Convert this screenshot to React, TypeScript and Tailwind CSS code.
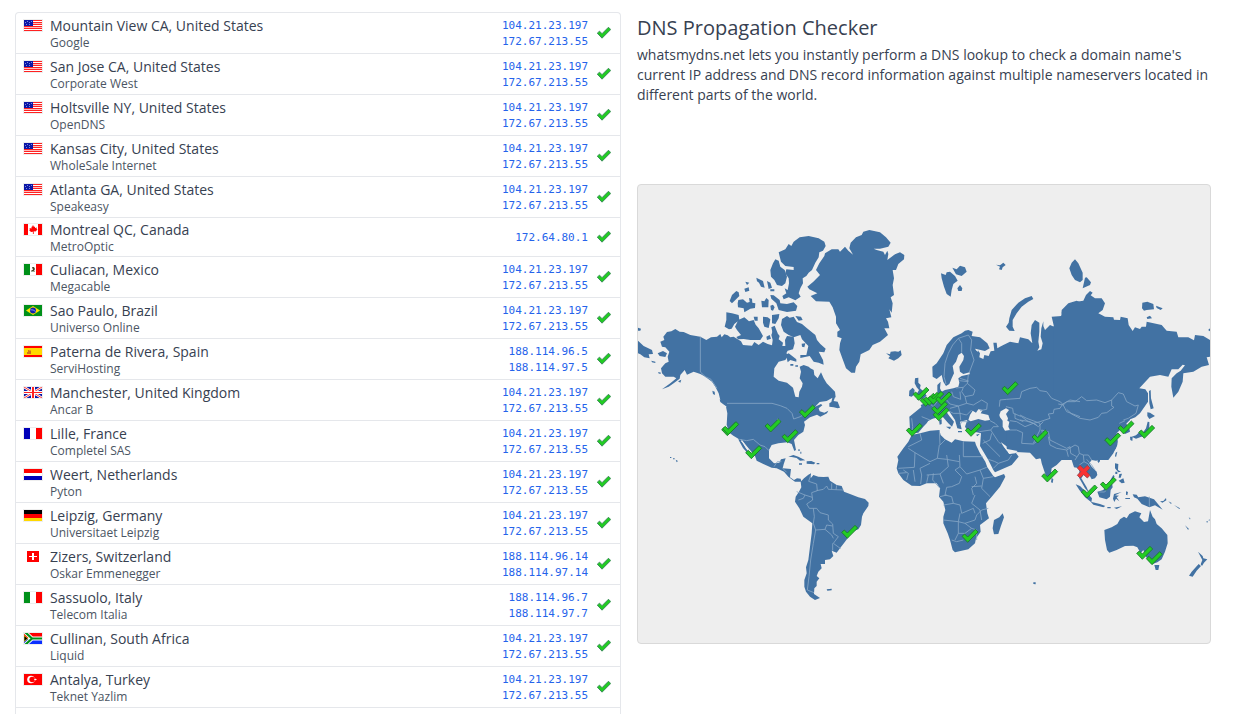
import React from "react";

type Country =
  | "us" | "ca" | "mx" | "br" | "es" | "gb" | "fr" | "nl"
  | "de" | "ch" | "it" | "za" | "tr";

interface Server {
  country: Country;
  location: string;
  provider: string;
  ips: string[];
}

const CLOUD = ["104.21.23.197", "172.67.213.55"];

const SERVERS: Server[] = [
  { country: "us", location: "Mountain View CA, United States", provider: "Google", ips: CLOUD },
  { country: "us", location: "San Jose CA, United States", provider: "Corporate West", ips: CLOUD },
  { country: "us", location: "Holtsville NY, United States", provider: "OpenDNS", ips: CLOUD },
  { country: "us", location: "Kansas City, United States", provider: "WholeSale Internet", ips: CLOUD },
  { country: "us", location: "Atlanta GA, United States", provider: "Speakeasy", ips: CLOUD },
  { country: "ca", location: "Montreal QC, Canada", provider: "MetroOptic", ips: ["172.64.80.1"] },
  { country: "mx", location: "Culiacan, Mexico", provider: "Megacable", ips: CLOUD },
  { country: "br", location: "Sao Paulo, Brazil", provider: "Universo Online", ips: CLOUD },
  { country: "es", location: "Paterna de Rivera, Spain", provider: "ServiHosting", ips: ["188.114.96.5", "188.114.97.5"] },
  { country: "gb", location: "Manchester, United Kingdom", provider: "Ancar B", ips: CLOUD },
  { country: "fr", location: "Lille, France", provider: "Completel SAS", ips: CLOUD },
  { country: "nl", location: "Weert, Netherlands", provider: "Pyton", ips: CLOUD },
  { country: "de", location: "Leipzig, Germany", provider: "Universitaet Leipzig", ips: CLOUD },
  { country: "ch", location: "Zizers, Switzerland", provider: "Oskar Emmenegger", ips: ["188.114.96.14", "188.114.97.14"] },
  { country: "it", location: "Sassuolo, Italy", provider: "Telecom Italia", ips: ["188.114.96.7", "188.114.97.7"] },
  { country: "za", location: "Cullinan, South Africa", provider: "Liquid", ips: CLOUD },
  { country: "tr", location: "Antalya, Turkey", provider: "Teknet Yazlim", ips: CLOUD },
];

const FLAGS: Record<Country, React.ReactNode> = {
  us: (
    <>
      <path fill="#fff" d="M0 0h18v11H0z" />
      <path fill="#f22" d="M0 0h18v1H0zM0 2h18v1H0zM0 4h18v1H0zM0 6h18v1H0zM0 8h18v1H0zM0 10h18v1H0z" />
      <path fill="#fbb" d="M9 3h9v1H9zM0 7h18v1H0z" />
      <path fill="#0a17a7" d="M0 0h9v6H0z" />
      <path fill="#7f88d8" d="M1 2h1v1H1zM3 1h1v1H3zM5 2h1v1H5zM7 1h1v1H7zM2 4h1v1H2zM5 4h1v1H5z" />
    </>
  ),
  ca: (
    <>
      <path fill="#fff" d="M0 0h18v11H0z" />
      <path fill="red" d="M0 0h4v11H0zM14 0h4v11h-4zM9 1l1 2 1-.5v1.500l2-.5-.5 1.500 1 .5-2 2-1.800-.2V10h-.8V7.800L7 8 5 6l1-.5L5.500 4l2 .5v-2L8 3z" />
    </>
  ),
  mx: (
    <>
      <path fill="#fff" d="M0 0h18v11H0z" />
      <path fill="#009018" d="M0 0h6v11H0z" />
      <path fill="red" d="M12 0h6v11h-6z" />
      <path fill="#4b4a30" d="M8 3l2 0 1 2-1 2H8l-1-1h2z" />
      <path fill="#9fae9a" d="M7 7h4v1H7z" />
    </>
  ),
  br: (
    <>
      <path fill="#00901a" d="M0 0h18v11H0z" />
      <path fill="#ffe000" d="M9 1l7 4.500L9 10 2 5.500z" />
      <circle cx="9" cy="5.500" r="3" fill="#1022b0" />
      <path stroke="#b8c8f0" strokeWidth=".7" fill="none" d="M6.300 4.800q3-.5 5.300 1.700" />
    </>
  ),
  es: (
    <>
      <path fill="red" d="M0 0h18v11H0z" />
      <path fill="#ffd800" d="M0 2h18v7H0z" />
      <path fill="#d0701c" d="M4 4h1l1 1 1-1v4H3V6h1z" />
    </>
  ),
  gb: (
    <>
      <path fill="#0a17a7" d="M0 0h18v11H0z" />
      <path stroke="#fff" strokeWidth="2.400" d="M0 0l18 11M18 0L0 11" />
      <path stroke="#f22" strokeWidth=".9" d="M0 0l18 11M18 0L0 11" />
      <path fill="#fff" d="M7 0h4v11H7zM0 4h18v3H0z" />
      <path fill="#f22" d="M8 0h2v11H8zM0 5h18v1H0z" />
    </>
  ),
  fr: (
    <>
      <path fill="#fff" d="M0 0h18v11H0z" />
      <path fill="#0000b8" d="M0 0h6v11H0z" />
      <path fill="red" d="M12 0h6v11h-6z" />
    </>
  ),
  nl: (
    <>
      <path fill="#fff" d="M0 0h18v11H0z" />
      <path fill="red" d="M0 0h18v4H0z" />
      <path fill="#0000b8" d="M0 7h18v4H0z" />
    </>
  ),
  de: (
    <>
      <path d="M0 0h18v4H0z" />
      <path fill="red" d="M0 4h18v4H0z" />
      <path fill="#ffd800" d="M0 8h18v3H0z" />
    </>
  ),
  ch: (
    <>
      <path fill="red" d="M3 0h12v11H3z" />
      <path fill="#fff" d="M8 2h2v3h3v1h-3v3H8V6H5V5h3z" />
    </>
  ),
  it: (
    <>
      <path fill="#fff" d="M0 0h18v11H0z" />
      <path fill="#00901a" d="M0 0h6v11H0z" />
      <path fill="red" d="M12 0h6v11h-6z" />
    </>
  ),
  za: (
    <>
      <path fill="red" d="M0 0h18v5H0z" />
      <path fill="#0a2fff" d="M0 6h18v5H0z" />
      <path stroke="#fff" strokeWidth="4" fill="none" d="M1-1l7 6.500L1 12M8 5.500h10" />
      <path stroke="#00901a" strokeWidth="2.200" fill="none" d="M1-1l7 6.500L1 12M7 5.500h11" />
      <path d="M0 2.500L4 5.500 0 8.500z" stroke="#ffd800" strokeWidth=".7" />
    </>
  ),
  tr: (
    <>
      <path fill="red" d="M0 0h18v11H0z" />
      <circle cx="7" cy="5.500" r="3.800" fill="#fff" />
      <circle cx="8.200" cy="5.500" r="2.800" fill="red" />
      <path fill="#fff" d="M11 4.500l1 .5 1 .5-1 .5-1 .5-1-1z" />
    </>
  ),
};

function Flag({ country }: { country: Country }) {
  return (
    <svg viewBox="-1 -1 20 13" className="-ml-px block h-[13px] w-5" aria-hidden="true">
      {country !== "ch" && <path fill="#eee" d="M-1-1h20v13H-1z" />}
      <svg width="18" height="11">{FLAGS[country]}</svg>
    </svg>
  );
}

const TICK = "M-24 1L-16-6-7 3 16-20 24-12-7 19Z";

function StatusTick() {
  return (
    <svg viewBox="-25 -21 50 43" className="block h-3 w-3.5" role="img" aria-label="Resolved">
      <path d={TICK} fill="#22cc22" stroke="#3a8a5a" strokeWidth="3.500" strokeLinejoin="round" />
    </svg>
  );
}

/* Marker positions, in map units. */
const TICKS: [number, number][] = [
  [2189, 1288], [2192, 1285], [2319, 1277], [2370, 1309], [2422, 1235], [2261, 1357], [2549, 1596],
  [2784, 1200], [2795, 1197], [2807, 1194], [2763, 1182], [2831, 1196], [2819, 1225], [2823, 1243],
  [2743, 1290], [2920, 1290], [3030, 1165], [3120, 1310], [3149, 1427], [2910, 1608],
  [3338, 1319], [3378, 1283], [3440, 1296], [3268, 1475], [3325, 1452], [3434, 1659], [3463, 1675],
];

function WorldMap() {
  return (
    <svg
      viewBox="1914 555 1716 1374"
      className="block w-full"
      fill="#4272a3"
      role="img"
      aria-label="World map of DNS results"
    >
      {/* North America and the Arctic islands */}
      <g transform="translate(1911 660)">
        <path d="M70 365L82 360 79 350 90 336 103 334 115 327 128 335 140 336 160 345 190 350 208 360 222 352 240 350 250 342 254 352 262 343 272 346 280 352 290 350 312 364 318 375 345 377 352 366 365 375 378 365 392 372 405 376 407 360 403 345 410 325 418 335 428 348 425 358 438 368 436 378 445 378 444 360 450 348 470 350 473 370 468 388 452 392 448 400 455 405 445 420 425 425 412 445 410 470 425 482 450 488 468 503 475 530 485 532 487 515 495 500 497 490 488 475 492 455 488 440 500 435 515 440 520 445 530 450 532 465 542 475 552 457 560 475 569 490 594 515 596 532 585 534 569 543 548 546 534 560 544 556 552 552 556 556 545 565 548 574 562 578 574 572 570 580 550 590 540 584 519 592 501 605 504 615 499 635 484 645 471 660 477 690 472 693 464 672 451 667 424 670 404 675 396 690 396 715 411 730 427 728 432 718 446 715 440 733 437 745 462 747 459 772 471 780 480 775 491 776 493 785 474 785 454 770 441 755 419 745 404 743 379 732 359 722 354 708 339 690 324 672 312 656 316 666 326 684 338 700 332 700 318 684 306 662 304 656 289 647 277 638 269 615 271 580 267 560 270 562 262 552 250 540 245 520 235 500 225 485 205 470 190 462 170 455 150 464 143 450 130 465 128 476 110 490 95 500 75 508 100 490 118 475 110 470 85 470 75 460 72 445 85 430 95 425 92 410 97 395 85 382 75 380Z" />
        <path d="M425 97L445 88 455 72 463 78 470 65 488 52 515 48 545 55 562 65 566 78 558 92 547 97 545 112 535 128 525 150 515 158 508 168 497 175 498 190 490 205 485 220 491 230 475 241 455 232 440 238 436 228 448 220 443 205 452 210 456 190 455 175 445 160 448 148 470 150 470 141 445 138 432 125Z" />
        <path d="M415 118L425 122 430 140 443 150 450 170 445 190 435 198 420 195 412 180 402 170 400 150 408 130Z" />
        <path d="M400 225L410 226 428 240 430 250 450 252 470 247 481 258 477 272 450 276 425 270 418 250 403 236ZM358 173L378 183 383 203 372 200 366 188 360 184ZM390 183L400 188 405 203 395 207ZM325 185L337 188 330 195ZM322 206L335 202 337 212 325 216ZM278 243L285 225 298 213 305 217 307 228 295 240 285 250ZM302 250L304 240 318 238 330 248 338 246 336 234 345 236 346 248 355 250 354 264 340 266 322 277 320 265 303 262ZM373 242L382 244 388 234 395 240 394 262 375 262ZM400 257L408 254 413 262 408 272 402 270ZM400 208h12v6h-12Z" />
        <path d="M268 277L285 280 305 285 307 300 292 312 284 326 276 328 263 320 268 300ZM300 308L304 300 322 292 336 304 350 300 356 314 365 325 378 348 370 360 340 360 320 357 303 358 298 351 312 345 300 330 294 320ZM378 290L392 292 400 298 398 310 395 324 382 320 378 308ZM350 290h12v12h-9ZM405 285L427 282 425 295 415 312 405 310ZM388 350L398 345 402 356 390 360ZM403 322L413 317 422 340 408 345Z" />
        <path d="M435 297L450 288 458 293 470 290 480 306 495 312 510 325 535 345 540 360 550 372 566 386 562 397 545 395 558 420 560 434 545 428 530 425 518 408 490 414 490 405 508 405 514 378 495 358 490 345 470 352 455 345 440 335 432 315ZM475 288L492 290 497 300 485 302ZM447 404L455 400 478 418 478 425 460 420 452 427ZM460 432h9v5h-9ZM475 436h8v4h-8ZM494 371L505 370 502 382 495 380Z" />
        <path d="M577 550L583 546 588 526 594 532 590 543 602 545 609 563 602 565 590 562 577 560ZM248 538L275 554 278 564 262 555 250 546ZM226 512L233 515 234 525 228 522ZM3 362L20 378 45 390 48 402 35 403 38 415 22 412 10 403 3 400ZM3 323L12 326 10 332 3 332ZM62 400L78 393 90 400 85 411 68 408ZM43 422L55 425 55 429 45 427ZM64 456l8 2-2 4-6-2ZM123 484L133 479 130 488Z" />
        <path fill="none" stroke="#eee" strokeWidth="3" d="M421 598l8 4M552 548l14 8 0 14" />
      </g>

      {/* Caribbean and South America */}
      <g transform="translate(1950 1200)">
        <path d="M415 170L430 165 445 170 466 181 450 182 440 174 425 171ZM470 184L484 183 496 188 492 193 470 191ZM500 189h8v4h-8ZM447 190h9v4h-9ZM445 148h4v5h-4ZM451 155h3v6h-3ZM60 171h4v3h-4ZM69 175h5v3h-5ZM77 179L84 183 80 187Z" />
        <path d="M452 245L462 235 475 224 483 220 482 235 490 225 505 230 520 231 535 230 540 242 560 255 575 258 582 275 600 282 625 292 645 297 656 308 655 318 640 340 636 350 633 375 625 388 605 395 595 412 585 425 570 445 560 458 545 452 550 468 540 478 525 480 525 492 512 492 515 505 505 515 500 528 508 535 500 545 500 558 493 565 492 582 510 594 495 600 480 590 468 575 463 560 463 540 470 520 468 502 475 480 480 440 485 400 487 370 460 350 448 325 435 305 437 290 447 275 454 262ZM530 568L545 566 545 571 532 572Z" />
      </g>

      {/* Greenland, Iceland and Svalbard */}
      <g transform="translate(2340 660)">
        <path d="M82 200L100 185 120 165 108 150 118 130 133 108 135 100 155 88 175 88 180 95 195 80 205 92 219 104 208 85 212 68 228 52 245 45 250 35 268 30 300 37 318 52 332 68 325 80 300 86 281 86 290 90 310 95 315 105 322 92 325 102 322 120 345 103 360 97 373 105 372 118 355 132 348 150 338 150 342 175 338 195 342 225 332 232 338 250 335 278 328 268 334 292 318 295 324 305 328 325 313 325 324 345 300 365 278 375 268 390 242 403 238 425 228 440 225 458 214 458 198 445 188 418 178 390 180 370 185 355 172 350 172 335 180 330 168 310 168 290 158 262 148 245 108 244 92 228 112 220 88 208Z" />
        <path d="M318 400L330 403 332 395 345 394 355 395 362 391 365 405 355 415 342 422 325 415 330 409ZM483 160L497 165 500 157 510 155 525 168 533 182 520 192 515 210 512 230 500 222 492 200 485 175ZM517 143L530 148 540 137 555 142 560 155 545 168 528 163ZM532 205L540 195 547 205 545 213 535 213Z" />
      </g>

      {/* Europe, north and west Russia */}
      <g transform="translate(2700 750)">
        <path d="M30 500L65 500 68 480 62 465 75 460 85 452 100 445 112 430 112 405 122 395 120 415 125 425 135 420 160 415 175 410 178 398 175 385 185 378 209 373 209 367 190 372 180 365 178 350 190 330 192 318 185 308 175 315 168 335 158 348 162 370 155 385 148 402 138 408 130 395 125 375 110 387 98 380 97 350 110 340 130 310 140 285 160 262 185 250 195 242 205 240 218 245 215 258 240 262 262 280 269 295 255 303 232 298 240 310 238 322 250 327 253 315 266 318 272 304 283 302 280 278 290 278 292 295 300 290 310 285 330 275 355 280 360 262 385 268 397 280 392 250 395 225 405 210 418 218 418 245 415 275 418 292 412 302 424 298 428 280 422 260 424 235 430 214 430 228 435 240 450 225 462 230 455 200 485 198 485 180 505 160 530 152 545 158 545 610 480 620 240 500 140 480 110 500 70 520Z" />
        <path d="M45 385L55 383 55 398 62 405 60 415 72 425 80 437 72 445 50 450 58 440 50 432 57 420 50 412 44 400ZM28 422L38 413 44 420 42 434 35 440 27 438ZM288 44L300 46 310 38 317 45 308 52 305 60 297 58 300 50ZM395 138L400 147 385 155 365 170 350 190 338 210 338 230 344 243 328 242 318 230 326 218 328 205 335 180 355 158 375 145Z" />
      </g>

      {/* East Russia, Korea and Japan */}
      <g transform="translate(3180 750)">
        <path d="M-20 230L5 195 5 185 20 170 50 155 70 152 78 135 90 123 98 128 92 136 105 145 125 145 135 160 128 180 115 190 135 200 160 202 162 209 180 210 182 200 203 205 206 225 218 243 225 232 240 237 245 230 258 230 260 215 305 225 320 242 350 245 355 262 385 262 402 271 405 255 430 258 450 270 450 320 440 322 447 345 425 350 400 365 370 370 368 395 355 425 340 443 334 410 335 385 350 370 362 362 375 346 368 344 355 358 335 358 325 380 300 375 270 380 238 415 256 418 264 430 264 455 240 490 226 502 205 510 198 520 208 535 210 545 195 552 188 535 178 520 170 515 155 530 165 540 172 545 162 550 172 570 172 585 160 610 145 630-20 630ZM45 28L55 40 68 68 68 90 60 97 45 90 35 75 28 55 35 38ZM75 83L80 82 93 97 90 105 68 115ZM247 158L262 155 280 162 282 178 260 180 252 182 246 175ZM288 167L308 175 302 180 290 174ZM260 202L270 197 276 205 262 207ZM447 236h4v8l-6-3Z" />
        <path d="M215 560L228 556 236 548 250 546 258 535 263 515 268 516 268 530 264 545 262 555 240 562 228 566ZM210 560L218 560 217 573 211 570ZM262 498L262 487 270 488 285 498 268 507ZM267 423L272 420 273 445 281 475 272 478 268 460ZM167 608L172 605 168 622 165 618Z" />
      </g>

      {/* Mediterranean, Middle East and Africa */}
      <g transform="translate(2640 1140)">
        <path d="M88 110L150 60H540V240L490 240 480 235 465 215 420 215 395 210 362 186 375 205 388 222 405 215 416 230 395 255 345 277 340 270 325 240 300 198 303 160 290 157 265 155 255 140 262 120 240 125 245 148 232 145 225 120 205 90 197 92 208 108 222 125 216 140 205 130 188 110 180 105 165 115 150 115 140 130 130 140 115 158 100 160 90 150ZM198 140h15l-3 8ZM177 120l8-2v14l-6 2Z" />
        <path d="M95 165L120 160 150 152 178 150 182 165 195 178 215 188 225 178 250 184 285 185 288 195 300 220 316 245 322 262 340 288 345 292 372 282 376 290 360 320 335 350 318 370 322 400 327 415 300 435 302 455 288 475 285 490 265 508 225 517 218 510 210 480 203 460 190 430 190 410 196 390 190 365 177 350 180 325 170 310 140 310 120 318 95 317 70 300 55 280 50 265 55 240 52 230 70 205 85 185ZM368 400L372 412 362 440 355 462 342 463 338 445 342 420 358 412ZM234 153h12v4h-12ZM288 164l12-3-8 8Z" />
      </g>

      {/* South and South-East Asia, Oceania */}
      <g transform="translate(3060 1200)">
        <path d="M-40 155V0H320L330 60 290 100 293 125 288 145 270 168 248 178 238 180 228 182 215 180 208 190 215 200 230 215 232 225 225 235 215 238 208 225 195 215 190 225 184 235 200 262 207 278 195 265 184 245 178 235 178 205 162 202 155 180 145 170 130 175 110 195 95 205 92 225 84 240 75 220 65 190 62 175 48 178 30 158ZM95 233L100 238 98 249 93 247ZM232 183l8-6 0 7-5 5ZM167 253L180 258 205 283 216 295 214 307 195 292 178 270ZM212 305L240 312 256 318 250 322 220 314ZM262 321h10v4h-10ZM282 323l24-4-16 8ZM232 275L250 270 262 252 275 242 278 262 272 270 270 290 260 298 238 292ZM282 282L305 276 285 286 297 287 290 292 298 304 288 296 283 306 279 296ZM285 190L295 192 294 210 303 215 295 217 285 205ZM286 215h6v7h-6ZM298 222l8-1-4 12-6 0ZM296 242L310 235 314 248 305 250ZM280 225l4 4-14 18-2-2ZM318 274l6 2-2 10-4-2ZM316 294h14v3h-14Z" />
        <path d="M338 283L350 284 355 292 375 289 402 298 412 310 428 329 405 316 388 322 365 312 352 296 342 292ZM420 304l10-1 8-9 1 7-12 7ZM445 304l10 5-2 3ZM462 315l18 10-2 2ZM506 351l6 6-3 1ZM495 376L507 387 504 389ZM558 365l6-2-2 5ZM565 360l6-2-3 4Z" />
        <path d="M253 390L275 382 292 372 300 358 312 350 320 355 328 342 345 334 364 340 358 352 372 366 384 364 390 330 398 350 405 358 410 372 425 385 442 405 443 430 435 455 425 478 412 487 398 492 385 482 375 465 370 450 362 460 352 442 340 437 315 438 290 450 268 458 261 450 255 420ZM403 495L418 495 415 510 407 510ZM534 455L548 468 550 475 562 478 552 488 546 498 542 493 547 480ZM536 492L543 498 530 512 518 530 507 527 515 515ZM40 547l7 0 0 6-7-1Z" />
      </g>

      {/* Inland seas */}
      <g transform="translate(2700 750)" fill="#eee">
        <path d="M205 510L210 495 218 482 228 488 235 478 248 480 242 490 265 495 270 510 255 512 235 507 212 514ZM298 495L302 484 318 475 327 480 318 492 324 505 322 512 328 515 325 530 330 540 315 542 308 530 308 512 300 502ZM225 296l8 2 2 8-6-4Z" />
      </g>
      <path d="M3004 1330l17 17 20 4 12 2-7 7-18 2-13-17Z" fill="#eee" />
      <path d="M2225 1320l18 24-3 2-16-22Z" fill="#eee" />

      {/* National borders */}
      <g fill="none" stroke="#86a6c5" strokeWidth="2.500" strokeLinejoin="round">
        <path transform="translate(1911 660)" d="M190 350V456L205 470 222 478 240 505M270 550H405L430 557 450 565 465 580 470 597 490 590 520 570 536 560M307 658L329 662 349 658 369 675 384 680 396 692M411 740l10-15 12 0M437 745l12 12" />
        <path transform="translate(1950 1200)" d="M482 226L476 244 500 252 502 272 485 278 488 300 470 312 478 325 500 325 510 338 535 345 535 360 548 372 550 400 565 410 550 430 572 446M500 272L520 268 530 258 535 268 580 270M545 268V250M558 270L560 256M440 275L465 285 487 292M445 300L460 295 465 285M490 325L493 350 490 370 497 390 490 430 482 480 477 530 472 570 492 578M497 390L525 388 530 375 548 378M525 388L545 405 550 415M548 430V452" />
        <path transform="translate(2700 750)" d="M138 402L132 380 135 340 145 310 158 285 175 265 205 255M175 265L185 280V308M205 255L215 270 212 300 222 330 208 367M205 375L202 400 190 412M178 392L205 395M180 385l26 8M202 400L225 420 220 435 195 440 185 425 190 412 168 414M195 440L200 460 220 465 245 450 262 460 260 478 240 482M200 460L175 468 150 462 140 450M155 425L160 440 182 448 180 425M112 425L115 450 100 470 108 485M150 475L175 468 180 490 200 495 215 480M140 480L160 490 180 490 182 510M85 458L100 470M115 450L140 450M205 515L185 515 180 525M35 505L38 530 36 545M65 500L90 510M298 470L300 450 320 448 360 445 365 425 390 415 410 412 420 422 440 425 455 445 480 455 488 462 480 475 462 478 460 490 445 492 450 505 420 515 400 520 385 515 365 500 340 490 338 475 318 470M488 462L510 450 540 455M488 462L500 485 540 500M330 512L350 515 375 530 400 520 415 530 430 515M328 540L350 540 368 548 365 580 400 582 430 560 425 540 445 545 450 570 470 580 500 595 510 590 512 610 530 620M270 512L285 520 295 530 280 530M238 545L272 540 280 530M248 580L270 570 275 550M250 570L300 620M272 540L295 575 302 582M345 490V505L370 515" />
        <path transform="translate(3180 750)" d="M-5 462L10 465 20 455 45 455 65 440 80 452 110 450 135 458 155 450 155 468 162 472 140 488 125 490 115 502 90 510 60 505 35 492 20 478M155 450L175 428 190 432 200 455 225 468 235 465 228 490 205 505 190 510M178 520L195 512" />
        <path transform="translate(2640 1140)" d="M120 160L125 180 85 200M85 205L105 218 103 262 55 265M105 218L150 245 172 235M150 250L120 265 125 285M178 195L172 235 200 238 238 245M178 150L180 195 195 180M250 184V230H308M238 225L240 260 225 270 245 290 238 310 215 320 200 322M200 225L205 260 180 282 140 285M240 260L260 282 300 270 320 262M300 270L310 295 340 290M285 290L290 310 275 325 280 345M310 295L305 325 330 350M275 320L305 318M200 322L195 345 215 350 220 370 240 375 245 400 280 385 285 400M190 375L220 370M190 420L235 425 240 400M235 425V460L225 480M235 425L255 430 285 420 290 405 305 390 325 385M285 345L275 370 300 390 305 420M235 460L255 460 275 445 290 450 290 480M255 430L275 445M70 270L85 280 80 300M100 270L105 305M125 285L122 312M145 285L140 308M160 280L158 300 180 325M180 282L190 310M55 280L80 278M180 350L200 345M215 480L230 485 250 480M340 265L355 250 385 240 395 225M325 238l18 6 12 6" />
        <path transform="translate(3060 1200)" d="M85 110L90 135 110 145 140 150 145 170M140 150L165 135 175 140 178 160 165 180M178 160L190 165 205 165 215 180M190 165L192 185 178 195M200 178L215 195 225 210M192 185L205 192 210 205 195 208M388 290V320M238 276l16 0 16-20M40 130L60 90 60 70M0 60L30 65 50 75M0 45L20 55 60 70" />
      </g>

      {/* Result markers */}
      <g fill="#23cc23" stroke="#1c7330" strokeWidth="2.500" strokeLinejoin="round">
        {TICKS.map(([x, y]) => (
          <path key={`${x}-${y}`} transform={`translate(${x} ${y})`} d={TICK} />
        ))}
      </g>
      <path
        transform="translate(3251 1415)"
        fill="#fa3232"
        stroke="#8d4550"
        strokeWidth="2.500"
        strokeLinejoin="round"
        d="M-11-19L0-9 11-19 19-11 9 0 19 11 11 19 0 9-11 19-19 11-9 0-19-11Z"
      />
    </svg>
  );
}

export default function App() {
  return (
    <main className="grid min-h-screen grid-cols-[minmax(0,606fr)_minmax(0,574fr)] gap-4 bg-white pt-3 pr-[26px] pl-[15px] font-['Open_Sans','Noto_Sans',sans-serif] text-[#374151]">
      <section className="rounded-t border-x border-t border-gray-200" aria-label="DNS results">
        <table className="w-full border-separate border-spacing-0">
          <tbody>
            {SERVERS.map((s) => (
              <tr key={s.location}>
                <td className="border-b border-gray-200 pt-1 pl-2">
                  <div className="flex items-start gap-[7px]">
                    <div className="pt-px">
                      <Flag country={s.country} />
                    </div>
                    <div>
                      <div className="text-sm leading-4">{s.location}</div>
                      <div className="text-xs leading-[18px] text-[#4b5563]">{s.provider}</div>
                    </div>
                  </div>
                </td>
                <td className="border-b border-gray-200 pt-[5px] pr-2 pb-[3px] text-right font-['DejaVu_Sans_Mono',monospace] text-[11px] leading-4 text-[#2563eb]">
                  {s.ips.map((ip) => (
                    <a key={ip} href={`#${ip}`} className="block">
                      {ip}
                    </a>
                  ))}
                </td>
                <td className="w-6 border-b border-gray-200 py-1 pr-2 pl-px">
                  <StatusTick />
                </td>
              </tr>
            ))}
          </tbody>
        </table>
      </section>

      <section>
        <h1 className="text-xl leading-8">DNS Propagation Checker</h1>
        <p className="pt-px text-sm leading-5">
          whatsmydns.net lets you instantly perform a DNS lookup to check a domain name's current IP address and DNS
          record information against multiple nameservers located in different parts of the world.
        </p>
        <div className="mt-[79px] overflow-hidden rounded border border-[#d9d9d9] bg-[#eee]">
          <WorldMap />
        </div>
      </section>
    </main>
  );
}
